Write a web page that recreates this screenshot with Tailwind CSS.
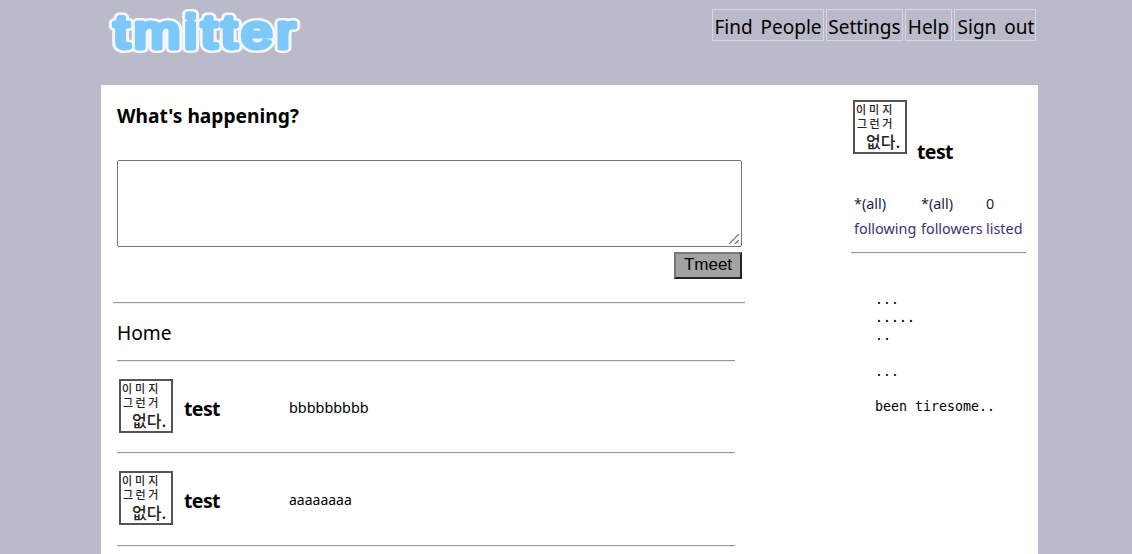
<!DOCTYPE html>
<html lang="ko">
<head>
<meta charset="UTF-8">
<title>Tmitter</title>
<script src="https://cdn.jsdelivr.net/npm/@tailwindcss/browser@4"></script>
</head>
<body class="h-[554px] overflow-hidden bg-[#bbbaca] font-['Noto_Sans','Noto_Sans_CJK_KR',sans-serif] text-black">
  <!-- Header -->
  <header class="h-[85px] w-[937px] ml-[101px] flex justify-between">
    <svg width="210" height="60" viewBox="0 0 210 60" class="mt-[2px] ml-[2px] blur-[0.5px]">
      <g font-family="'Liberation Sans', sans-serif" font-size="46" stroke-linejoin="round" stroke-linecap="round" transform="translate(11 46) scale(1.2 1)">
        <text x="0" y="0" textLength="151" lengthAdjust="spacing" fill="#fff" stroke="#f4f6fa" stroke-width="10">tmitter</text>
        <text x="0" y="0" textLength="151" lengthAdjust="spacing" fill="#7cc8fb" stroke="#7cc8fb" stroke-width="5">tmitter</text>
      </g>
    </svg>
    <nav class="mt-[9px] mr-[2px] flex gap-[2px] items-start text-[19px] leading-[34px] [word-spacing:3px]">
      <a class="h-[32px] w-[112px] border border-[#d6d6e2] text-center whitespace-nowrap">Find People</a>
      <a class="h-[32px] w-[77px] border border-[#d6d6e2] text-center whitespace-nowrap">Settings</a>
      <a class="h-[32px] w-[47px] border border-[#d6d6e2] text-center whitespace-nowrap">Help</a>
      <a class="h-[32px] w-[82px] border border-[#d6d6e2] pl-[2px] text-center whitespace-nowrap">Sign out</a>
    </nav>
  </header>

  <div class="w-[937px] h-[469px] ml-[101px] bg-white flex overflow-hidden">
    <!-- Main column -->
    <main class="w-[750px] shrink-0 pl-[12px]">
      <h2 class="pl-[4px] pt-[17px] text-[19.2px] leading-[28px] font-bold">What's happening?</h2>
      <div class="pl-[4px] mt-[30px]">
        <div class="relative w-[625px] h-[87px]">
          <textarea class="block w-full h-full border border-[#767676] rounded-[2px] resize-none"></textarea>
          <svg width="10" height="10" viewBox="0 0 10 10" class="absolute right-[3px] bottom-[3px]" stroke="#666" stroke-width="1.2" fill="none">
            <path d="M0 10 10 0M6 10l4-4"/>
          </svg>
        </div>
        <div class="w-[625px] mt-[5px] flex justify-end">
          <button class="w-[68px] h-[27px] pb-[2px] bg-[#a3a3a3] border-2 border-t-[#777] border-l-[#777] border-r-[#222] border-b-[#222] font-['Liberation_Sans',sans-serif] text-[17px] leading-[20px]">Tmeet</button>
        </div>
      </div>
      <div class="w-[632px] mt-[23px] border-t border-b border-t-[#999] border-b-[#eee] h-[2px]"></div>
      <h3 class="pl-[4px] mt-[15px] text-[19.2px] leading-[28px]">Home</h3>
      <div class="ml-[4px] w-[618px] mt-[13px] border-t border-b border-t-[#999] border-b-[#eee] h-[2px]"></div>

      <!-- Tweets -->
      <article class="ml-[6px] mt-[17px] h-[73px] flex">
        <div class="w-[54px] h-[54px] shrink-0 border-2 border-[#555] bg-white flex flex-col font-['Noto_Sans_CJK_KR',sans-serif] font-medium text-[#222] overflow-hidden">
          <span class="text-[11px] leading-[14px] tracking-[3px] pl-[1px] whitespace-nowrap">이미지</span>
          <span class="text-[11px] leading-[15px] tracking-[2.5px] pl-[2px] whitespace-nowrap">그런거</span>
          <span class="text-[16px] leading-[21px] pl-[11px] whitespace-nowrap">없다.</span>
        </div>
        <strong class="w-[105px] pl-[11px] pt-[16px] text-[19.5px] tracking-[-0.6px] leading-[28px]">test</strong>
        <p class="pl-[11px] pt-[19px] text-[14.4px] leading-[20px]">bbbbbbbbb</p>
      </article>
      <div class="ml-[4px] w-[618px] border-t border-b border-t-[#999] border-b-[#eee] h-[2px]"></div>
      <article class="ml-[6px] mt-[17px] h-[74px] flex">
        <div class="w-[54px] h-[54px] shrink-0 border-2 border-[#555] bg-white flex flex-col font-['Noto_Sans_CJK_KR',sans-serif] font-medium text-[#222] overflow-hidden">
          <span class="text-[11px] leading-[14px] tracking-[3px] pl-[1px] whitespace-nowrap">이미지</span>
          <span class="text-[11px] leading-[15px] tracking-[2.5px] pl-[2px] whitespace-nowrap">그런거</span>
          <span class="text-[16px] leading-[21px] pl-[11px] whitespace-nowrap">없다.</span>
        </div>
        <strong class="w-[105px] pl-[11px] pt-[16px] text-[19.5px] tracking-[-0.6px] leading-[28px]">test</strong>
        <p class="pl-[11px] pt-[19px] text-[14px] leading-[20px]">aaaaaaaa</p>
      </article>
      <div class="ml-[4px] w-[618px] border-t border-b border-t-[#999] border-b-[#eee] h-[2px]"></div>
    </main>

    <!-- Sidebar -->
    <aside class="w-[187px] pt-[15px]">
      <div class="flex items-end h-[66px]">
        <div class="w-[54px] h-[54px] ml-[2px] mb-[12px] shrink-0 border-2 border-[#555] bg-white flex flex-col font-['Noto_Sans_CJK_KR',sans-serif] font-medium text-[#222] overflow-hidden">
          <span class="text-[11px] leading-[14px] tracking-[3px] pl-[1px] whitespace-nowrap">이미지</span>
          <span class="text-[11px] leading-[15px] tracking-[2.5px] pl-[2px] whitespace-nowrap">그런거</span>
          <span class="text-[16px] leading-[21px] pl-[11px] whitespace-nowrap">없다.</span>
        </div>
        <strong class="pl-[10px] text-[19.5px] tracking-[-0.6px] leading-[28px]">test</strong>
      </div>
      <div class="mt-[25px] pl-[3px] grid grid-cols-[67px_65px_auto] text-[14.4px] leading-[25px] text-[#1f1a40] whitespace-nowrap">
        <span>*(all)</span><span>*(all)</span><span>0</span>
        <span class="text-[#44306e]">following</span><span class="text-[#44306e]">followers</span><span class="text-[#44306e]">listed</span>
      </div>
      <div class="w-[175px] mt-[11px] border-t border-b border-t-[#999] border-b-[#eee] h-[2px]"></div>
      <div class="mt-[37px] pl-[24px] font-['DejaVu_Sans_Mono',monospace] text-[13.3px] leading-[18px] whitespace-pre">...
.....
..

...</div>
      <p class="mt-[17px] pl-[24px] font-['DejaVu_Sans_Mono',monospace] text-[13.3px] leading-[18px] whitespace-pre">been tiresome..</p>
    </aside>
  </div>
</body>
</html>
